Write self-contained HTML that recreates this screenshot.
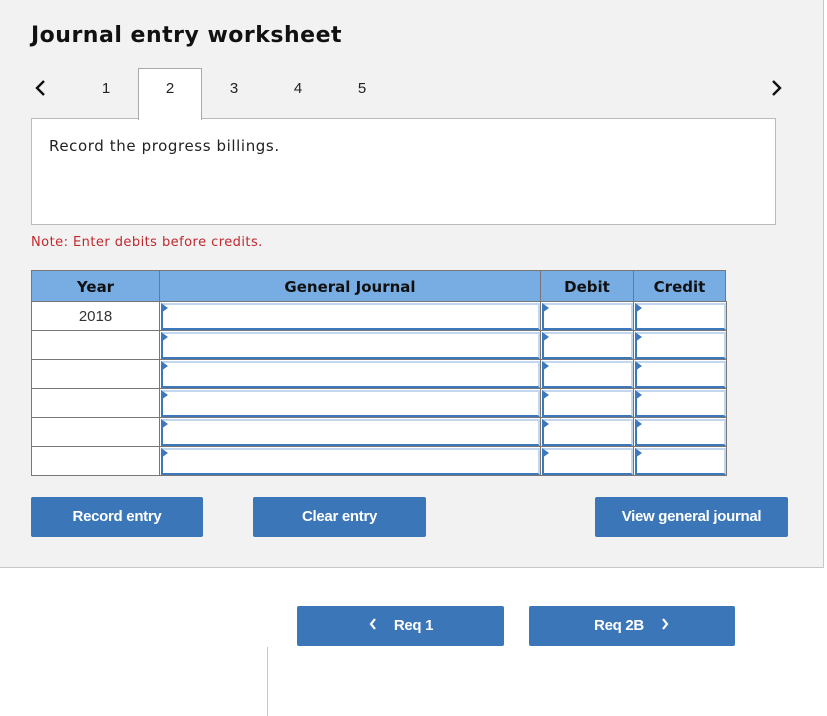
<!DOCTYPE html>
<html><head><style>
*{margin:0;padding:0;box-sizing:border-box}
body{width:827px;height:716px;background:#fff;position:relative;overflow:hidden;font-family:"Liberation Sans",Arial,sans-serif}
.a{position:absolute}
.panel{left:0;top:0;width:824px;height:568px;background:#f2f2f2;border-right:1px solid #c8c8c8;border-bottom:1px solid #c8c8c8}
h1{position:absolute;left:31px;top:23px;font-family:"DejaVu Sans",sans-serif;font-size:22px;font-weight:bold;color:#111;letter-spacing:0.5px}
.tab{top:80px;font-size:15px;color:#222;width:20px;text-align:center}
.box{left:31px;top:118px;width:745px;height:107px;background:#fff;border:1px solid #bbb}
.tab2{left:138px;top:68px;width:64px;height:52px;background:#fff;border:1px solid #aaa;border-bottom:none;text-align:center;padding-top:11px;font-size:15px;color:#222}
.btn{background:#3a76b8;color:#fff;font-weight:bold;font-size:15px;text-align:center;border-radius:2px;letter-spacing:-0.3px}
.hd{top:270px;height:32px;background:#78ade3;border:1px solid #777;font-family:"DejaVu Sans",sans-serif;font-weight:bold;font-size:15px;text-align:center;line-height:33px;color:#111}
.yr{left:31px;width:129px;height:30px;background:#fff;border:1px solid #777;font-size:15px;color:#333;text-align:center;line-height:29px}
.in{height:30px;background:#fff;border:1px solid #777}
.in i{position:absolute;left:1px;top:1px;right:0;bottom:0;border:2px solid #3d78bd;border-top:2px solid #c2d6ee;border-right:2px solid #c2d6ee;border-left:2px solid #3d78bd}
.in b{position:absolute;left:1px;top:1px;width:0;height:0;border-top:5px solid transparent;border-bottom:5px solid transparent;border-left:7px solid #3d78bd}
</style></head><body>
<div class="a panel"></div>
<h1>Journal entry worksheet</h1>
<svg class="a" style="left:33px;top:79px" width="14" height="18"><path d="M11 2 L4 9 L11 16" stroke="#111" stroke-width="2.4" fill="none"/></svg>
<svg class="a" style="left:770px;top:79px" width="14" height="18"><path d="M3 2 L10 9 L3 16" stroke="#111" stroke-width="2.4" fill="none"/></svg>
<div class="a tab" style="left:96px">1</div>
<div class="a tab" style="left:224px">3</div>
<div class="a tab" style="left:288px">4</div>
<div class="a tab" style="left:352px">5</div>
<div class="a box"></div>
<div class="a tab2">2</div>
<div class="a" style="left:49px;top:137px;font-family:'DejaVu Sans',sans-serif;font-size:15px;letter-spacing:0.6px;color:#222">Record the progress billings.</div>
<div class="a" style="left:31px;top:235px;font-family:'DejaVu Sans',sans-serif;font-size:13px;letter-spacing:0.45px;color:#c0282d">Note: Enter debits before credits.</div>

<div class="a hd" style="left:31px;width:129px">Year</div>
<div class="a hd" style="left:159px;width:382px">General Journal</div>
<div class="a hd" style="left:540px;width:94px">Debit</div>
<div class="a hd" style="left:633px;width:93px">Credit</div>

<div id="rows"></div>
<script>
var h='';for(var r=0;r<6;r++){var y=301+r*29;
h+='<div class="a yr" style="top:'+y+'px">'+(r==0?'2018':'')+'</div>';
[[159,382],[540,94],[633,94]].forEach(function(c){h+='<div class="a in" style="left:'+c[0]+'px;top:'+y+'px;width:'+c[1]+'px"><i></i><b></b></div>';});}
document.getElementById('rows').innerHTML=h;
</script>

<div class="a btn" style="left:31px;top:497px;width:172px;height:40px;line-height:40px">Record entry</div>
<div class="a btn" style="left:253px;top:497px;width:173px;height:40px;line-height:40px">Clear entry</div>
<div class="a btn" style="left:595px;top:497px;width:193px;height:40px;line-height:40px">View general journal</div>

<div class="a btn" style="left:297px;top:606px;width:207px;height:40px;line-height:40px"><svg width="10" height="14" style="vertical-align:-1px;margin-right:16px"><path d="M7 2 L3 7 L7 12" stroke="#fff" stroke-width="2.2" fill="none"/></svg>Req 1</div>
<div class="a btn" style="left:529px;top:606px;width:206px;height:40px;line-height:40px">Req 2B<svg width="10" height="14" style="vertical-align:-1px;margin-left:16px"><path d="M3 2 L7 7 L3 12" stroke="#fff" stroke-width="2.2" fill="none"/></svg></div>
<div class="a" style="left:267px;top:647px;width:1px;height:69px;background:#c8c8c8"></div>
</body></html>
